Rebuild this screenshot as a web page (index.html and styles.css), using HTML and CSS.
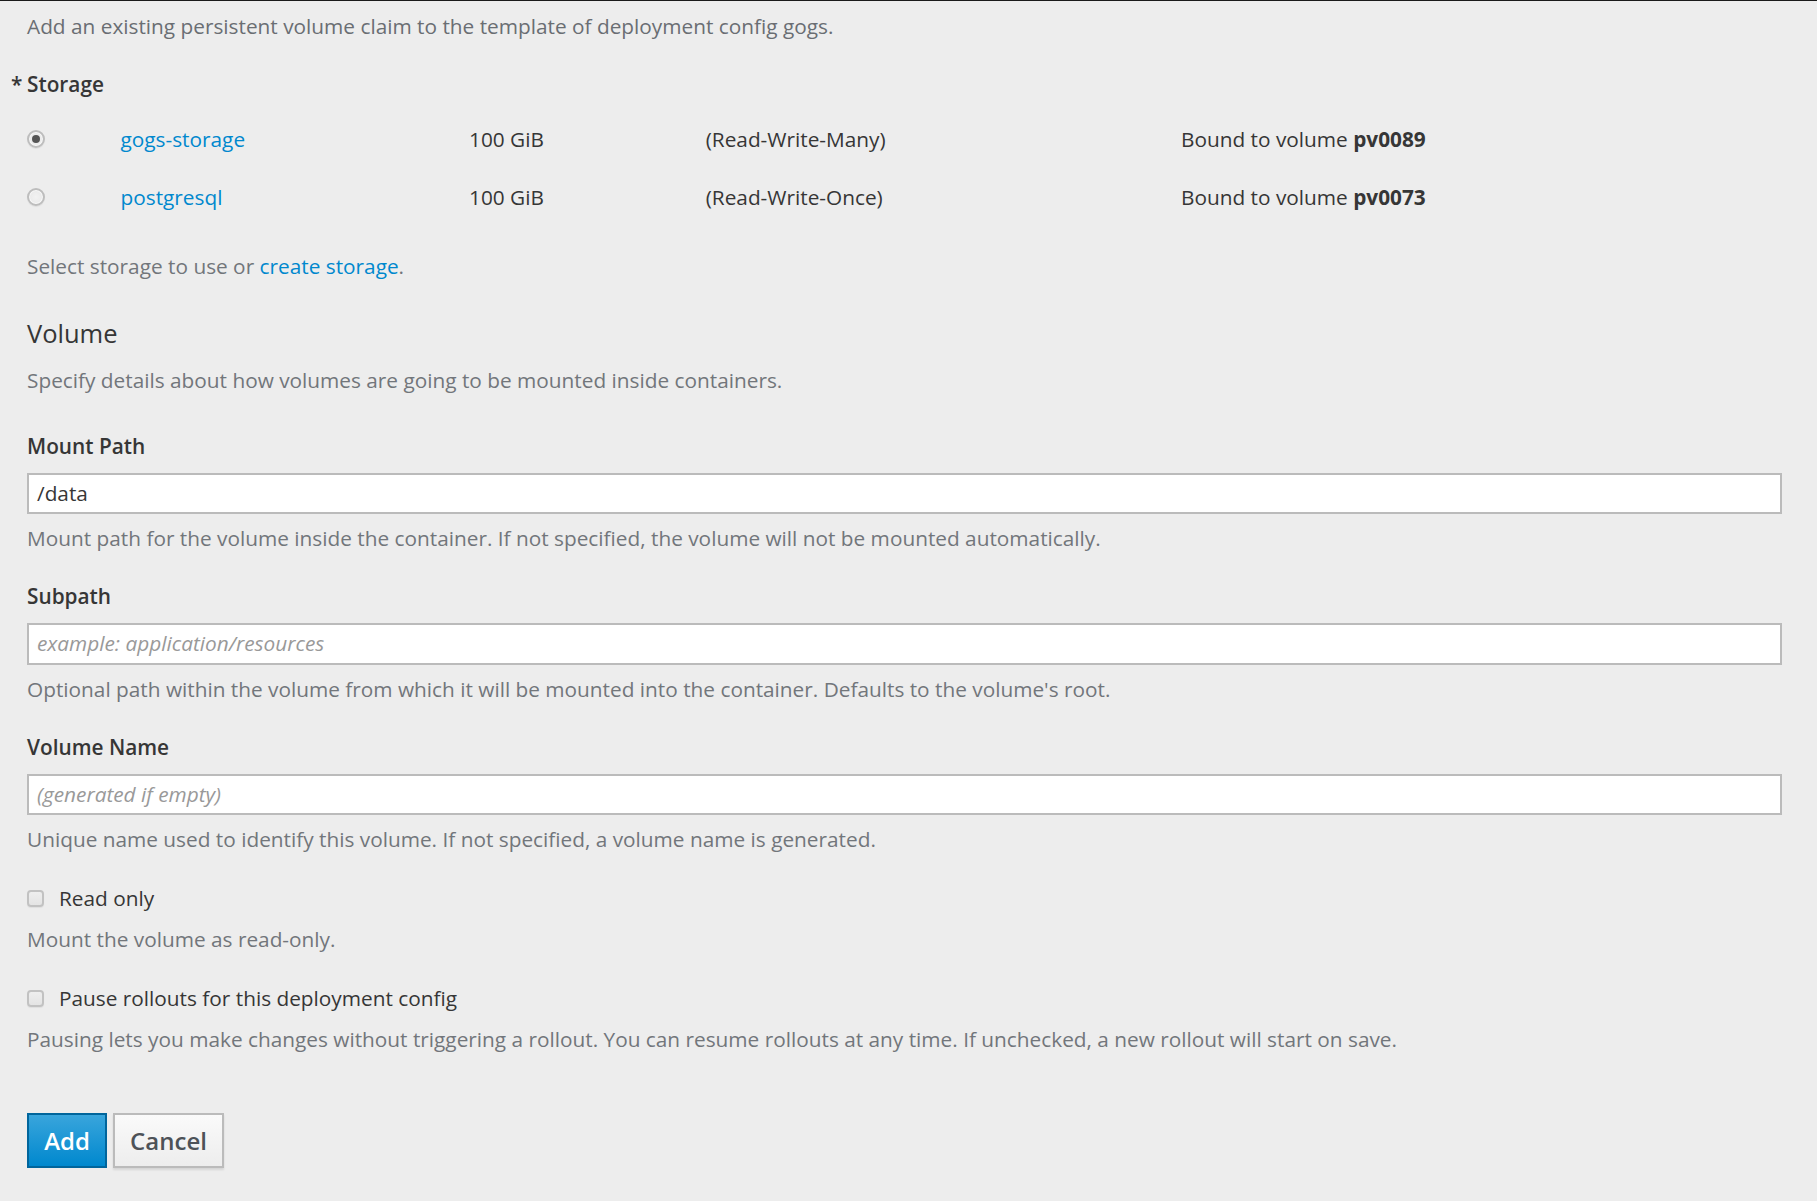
FILE: index.html
```html
<!DOCTYPE html>
<html>
<head>
<meta charset="utf-8">
<link rel="stylesheet" href="styles.css">
</head>
<body>
<div class="page">
  <p class="intro">Add an existing persistent volume claim to the template of deployment config gogs.</p>

  <div class="storage-label"><span class="req">*</span>Storage</div>
  <div class="storage-list">
    <div class="srow">
      <span class="radio checked"></span>
      <a class="link">gogs-storage</a>
      <span>100 GiB</span>
      <span>(Read-Write-Many)</span>
      <span>Bound to volume <b>pv0089</b></span>
    </div>
    <div class="srow">
      <span class="radio"></span>
      <a class="link">postgresql</a>
      <span>100 GiB</span>
      <span>(Read-Write-Once)</span>
      <span>Bound to volume <b>pv0073</b></span>
    </div>
  </div>
  <p class="help select-help">Select storage to use or <a class="link">create storage</a>.</p>

  <h3 class="section-title">Volume</h3>
  <p class="help specify">Specify details about how volumes are going to be mounted inside containers.</p>

  <div class="group g-mount">
    <div class="label">Mount Path</div>
    <div class="input">/data</div>
    <div class="help">Mount path for the volume inside the container. If not specified, the volume will not be mounted automatically.</div>
  </div>
  <div class="group">
    <div class="label">Subpath</div>
    <div class="input placeholder tall">example: application/resources</div>
    <div class="help">Optional path within the volume from which it will be mounted into the container. Defaults to the volume's root.</div>
  </div>
  <div class="group">
    <div class="label">Volume Name</div>
    <div class="input placeholder">(generated if empty)</div>
    <div class="help">Unique name used to identify this volume. If not specified, a volume name is generated.</div>
  </div>

  <div class="check-group">
    <div class="check"><span class="box"></span>Read only</div>
    <div class="help">Mount the volume as read-only.</div>
  </div>
  <div class="check-group">
    <div class="check"><span class="box"></span>Pause rollouts for this deployment config</div>
    <div class="help">Pausing lets you make changes without triggering a rollout. You can resume rollouts at any time. If unchecked, a new rollout will start on save.</div>
  </div>

  <div class="buttons">
    <button class="btn primary">Add</button>
    <button class="btn default">Cancel</button>
  </div>
</div>
</body>
</html>
```

FILE: styles.css
```css
html, body {
  margin: 0;
  padding: 0;
  background: #ededed;
}
body {
  font-family: "Open Sans", "Noto Sans", sans-serif;
  font-size: 20.8px;
  line-height: 27px;
  color: #363636;
  border-top: 1px solid #1a1a1a;
  min-height: 1200px;
}
.page {
  padding: 12px 35px 0 27px;
}
p { margin: 0; }
.link { color: #0088ce; text-decoration: none; }
.intro { color: #6a6e73; }
.help { color: #72767b; }

.storage-label {
  margin-top: 31px;
  font-weight: 600;
  color: #363636;
  position: relative;
}
.req {
  position: absolute;
  left: -16px;
  top: 0;
}
.storage-list {
  margin-top: 12px;
}
.srow {
  height: 58px;
  display: grid;
  grid-template-columns: 93.5px 348.5px 236.7px 475.3px auto;
  align-items: center;
}
.srow b { font-weight: 700; }
.radio {
  width: 18px;
  height: 18px;
  border-radius: 50%;
  border: 2px solid #bdbdbd;
  background: radial-gradient(circle, #f2f2f2 0, #e6e6e6 100%);
  box-sizing: border-box;
  margin-left: 0;
  position: relative;
  box-shadow: inset 0 0 0 1px #f8f8f8, 0 1px 1px rgba(0,0,0,0.06);
}
.radio.checked::after {
  content: "";
  position: absolute;
  left: 3px;
  top: 3px;
  width: 8px;
  height: 8px;
  border-radius: 50%;
  background: #555;
}
.select-help { margin-top: 27px; }

.section-title {
  margin: 36.6px 0 0;
  font-size: 25.5px;
  line-height: 32px;
  font-weight: 400;
  color: #363636;
}
.specify { margin-top: 18px; }

.group { margin-top: 31px; }
.g-mount { margin-top: 39px; }
.label { font-weight: 600; color: #363636; }
.input {
  margin-top: 13px;
  height: 41px;
  box-sizing: border-box;
  background: #fff;
  border: 2px solid #bbb;
  padding: 0 0 0 8px;
  display: flex;
  align-items: center;
  color: #363636;
}
.input.tall { height: 42px; }
.input.placeholder {
  color: #999;
  font-style: italic;
}
.group .help { margin-top: 11px; }

.check-group { margin-top: 32px; }
.check-group + .check-group { margin-top: 32px; }
.check {
  display: flex;
  align-items: center;
  color: #363636;
}
.box {
  width: 17px;
  height: 17px;
  box-sizing: border-box;
  border: 2px solid #c2c2c2;
  border-radius: 4px;
  background: linear-gradient(#eeeeee, #e4e4e4);
  margin: 0 15px 0 0;
  box-shadow: 0 1px 1px rgba(0,0,0,0.06);
}
.check-group .help { margin-top: 14px; }

.buttons {
  margin-top: 60.7px;
  display: flex;
  gap: 6px;
}
.btn {
  font-family: "Open Sans", "Noto Sans", sans-serif;
  font-size: 24px;
  font-weight: 600;
  height: 55px;
  box-sizing: border-box;
  padding: 0;
  margin: 0;
}
.primary {
  width: 80px;
  color: #fff;
  background: linear-gradient(#39a5dc, #0088ce);
  border: 2px solid #00659c;
}
.default {
  width: 111px;
  color: #4d5258;
  background: linear-gradient(#fafafa, #ededed);
  border: 2px solid #bbb;
  box-shadow: 0 2px 2px rgba(0,0,0,0.1);
}
```
